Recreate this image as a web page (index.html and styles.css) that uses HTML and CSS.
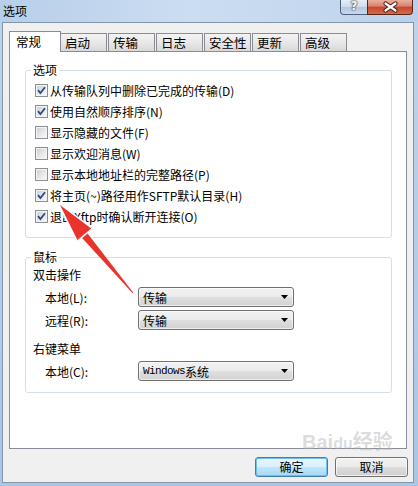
FILE: index.html
```html
<!DOCTYPE html>
<html lang="zh-CN">
<head>
    <meta charset="UTF-8">
    <title>选项</title>
    <link rel="stylesheet" href="styles.css">
</head>
<body>
    <div class="window">
        <div class="titlebar">
            <span class="title">选项</span>
            <div class="caption">
                <span class="cap-btn cap-help">?</span>
                <span class="cap-btn cap-close">
                    <svg width="45" height="14" viewBox="0 0 45 14">
                        <path d="M17.5 3.5 L27.5 10.5 M27.5 3.5 L17.5 10.5" stroke="#4a1c12" stroke-width="4.2" stroke-linecap="round"/>
                        <path d="M17.5 3.5 L27.5 10.5 M27.5 3.5 L17.5 10.5" stroke="#fff" stroke-width="2.2" stroke-linecap="round"/>
                    </svg>
                </span>
            </div>
        </div>

        <div class="client">
            <div class="tabs">
                <span class="tab active">常规</span>
                <span class="tab">启动</span>
                <span class="tab">传输</span>
                <span class="tab">日志</span>
                <span class="tab">安全性</span>
                <span class="tab">更新</span>
                <span class="tab">高级</span>
            </div>

            <div class="panel">
                <fieldset class="group opts">
                    <legend>选项</legend>
                    <label class="check"><span class="cb"><svg width="11" height="11" viewBox="0 0 11 11"><path d="M2 5.2 L4.4 8 L9 2.2" fill="none" stroke="#2c4a86" stroke-width="1.8"/></svg></span>从传输队列中删除已完成的传输(D)</label>
                    <label class="check"><span class="cb"><svg width="11" height="11" viewBox="0 0 11 11"><path d="M2 5.2 L4.4 8 L9 2.2" fill="none" stroke="#2c4a86" stroke-width="1.8"/></svg></span>使用自然顺序排序(N)</label>
                    <label class="check"><span class="cb"></span>显示隐藏的文件(F)</label>
                    <label class="check"><span class="cb"></span>显示欢迎消息(W)</label>
                    <label class="check"><span class="cb"></span>显示本地地址栏的完整路径(P)</label>
                    <label class="check"><span class="cb"><svg width="11" height="11" viewBox="0 0 11 11"><path d="M2 5.2 L4.4 8 L9 2.2" fill="none" stroke="#2c4a86" stroke-width="1.8"/></svg></span>将主页(~)路径用作SFTP默认目录(H)</label>
                    <label class="check"><span class="cb"><svg width="11" height="11" viewBox="0 0 11 11"><path d="M2 5.2 L4.4 8 L9 2.2" fill="none" stroke="#2c4a86" stroke-width="1.8"/></svg></span>退出Xftp时确认断开连接(O)</label>
                </fieldset>

                <fieldset class="group mouse">
                    <legend>鼠标</legend>
                    <div class="subhead">双击操作</div>
                    <div class="combo-row first">
                        <span class="lbl">本地(L):</span>
                        <div class="combo">传输<svg width="7" height="4" viewBox="0 0 7 4"><path d="M0 0 H7 L3.5 4 Z" fill="#000"/></svg></div>
                    </div>
                    <div class="combo-row">
                        <span class="lbl">远程(R):</span>
                        <div class="combo">传输<svg width="7" height="4" viewBox="0 0 7 4"><path d="M0 0 H7 L3.5 4 Z" fill="#000"/></svg></div>
                    </div>
                    <div class="subhead second">右键菜单</div>
                    <div class="combo-row first">
                        <span class="lbl">本地(C):</span>
                        <div class="combo"><span class="mono">Windows</span>系统<svg width="7" height="4" viewBox="0 0 7 4"><path d="M0 0 H7 L3.5 4 Z" fill="#000"/></svg></div>
                    </div>
                </fieldset>
            </div>

            <div class="actions">
                <button class="btn default">确定</button>
                <button class="btn">取消</button>
            </div>
        </div>

        <!-- annotation arrow drawn over the dialog -->
        <svg class="arrow" width="418" height="486" viewBox="0 0 418 486">
            <polygon points="133.4,292.7 86.8,232.4 81.2,237.0 132.6,293.3" fill="#e8342a"/>
            <polygon points="60,205 91.2,228.5 77.4,240" fill="#e8342a" stroke="#fff" stroke-width="3" stroke-linejoin="round" paint-order="stroke"/>
        </svg>

        <div class="watermark">Bai<span class="wm-du">du</span>经验</div>
    </div>
</body>
</html>
```

FILE: styles.css
```css
/* Page */
body {
    margin: 0;
    background: #fff;
    font-family: "Noto Sans CJK SC", sans-serif;
    font-size: 12px;
    color: #000;
}

/* Window frame */
.window {
    position: relative;
    width: 418px;
    height: 486px;
    overflow: hidden;
    background: linear-gradient(to bottom, #bcd3ec 0, #cadcf1 12px, #bdd3eb 22px, #aac6e6 100%);
}

.titlebar {
    display: flex;
    justify-content: space-between;
    height: 22px;
    background: linear-gradient(to right, #b7cfea, #cbddf1 45%, #c3d7ee 80%, #b9d0ea);
}

.title {
    padding: 4px 0 0 3px;
    line-height: 14px;
    font-size: 12px;
}

.caption {
    display: flex;
    height: 15px;
    margin-right: 5px;
}

.cap-btn {
    box-sizing: border-box;
    height: 15px;
    border: 1px solid #4d617c;
    border-top: none;
}

.cap-help {
    width: 27px;
    border-right: none;
    border-radius: 0 0 0 4px;
    background: linear-gradient(#e4ecf6, #cfdcec 50%, #b4c6de 51%, #c9d9ec);
    color: #fff;
    font-family: "DejaVu Sans", sans-serif;
    font-weight: bold;
    font-size: 12px;
    line-height: 13px;
    text-align: center;
    text-shadow: 0 0 1px #2c3b52, 0 0 1px #2c3b52, 0 0 2px #2c3b52;
}

.cap-close {
    width: 46px;
    border-color: #5a2418;
    border-radius: 0 0 4px 0;
    background: linear-gradient(#eab0a2, #d9806b 45%, #c4472c 50%, #d46a4f);
}

.cap-close svg {
    display: block;
}

/* Client area */
.client {
    box-sizing: border-box;
    width: 412px;
    height: 461px;
    margin-left: 2px;
    border: 1px solid #8495aa;
    background: #f0f0f0;
}

/* Tab strip */
.tabs {
    display: flex;
    align-items: flex-end;
    height: 20px;
    margin: 8px 0 0 6px;
}

.tab {
    box-sizing: border-box;
    width: 47px;
    height: 18px;
    margin-left: 1px;
    padding-left: 4px;
    border: 1px solid #898c95;
    border-bottom: none;
    background: linear-gradient(#f3f3f3, #e8e8e8 50%, #d8d8d8);
    font-size: 12.5px;
    line-height: 17px;
}

.tab.active {
    position: relative;
    z-index: 1;
    width: 52px;
    height: 21px;
    margin: 0 0 -1px 0;
    padding-left: 6px;
    background: #fff;
    line-height: 19px;
}

.tab.active + .tab {
    margin-left: -1px;
}

.panel {
    box-sizing: border-box;
    width: 398px;
    height: 398px;
    margin-left: 6px;
    padding: 11px 14px 0 15px;
    border: 1px solid #898c95;
    background: #fff;
}

/* Group boxes */
.group {
    min-width: 0;
    margin: 0;
    border: 1px solid #d5dfe5;
    border-radius: 3px;
}

.group legend {
    margin-left: 5px;
    padding: 0 2px;
    line-height: 14px;
}

.opts {
    padding: 3px 0 10px 0;
}

.mouse {
    margin-top: 12px;
    padding: 4px 0 11px 0;
}

.check {
    display: flex;
    align-items: center;
    height: 21px;
    margin-left: 9px;
    white-space: nowrap;
}

.cb {
    box-sizing: border-box;
    width: 13px;
    height: 13px;
    margin-right: 2px;
    border: 1px solid #8e8f8f;
    background: linear-gradient(135deg, #c8ccd2 0%, #e6e8eb 55%, #fafafa 100%);
    box-shadow: inset 0 0 0 1px #f4f4f4;
}

.cb svg {
    display: block;
}

.subhead {
    margin-left: 7px;
    line-height: 14px;
}

.subhead.second {
    margin-top: 12px;
}

.combo-row {
    display: flex;
    align-items: center;
    height: 20px;
    margin-top: 3px;
    padding-left: 19px;
}

.combo-row.first {
    margin-top: 5px;
}

.lbl {
    width: 93px;
}

.combo {
    display: flex;
    align-items: center;
    box-sizing: border-box;
    width: 156px;
    height: 20px;
    padding: 0 5px 0 4px;
    border: 1px solid #707070;
    border-radius: 3px;
    background: linear-gradient(#f2f2f2, #ebebeb 50%, #dfdfdf 51%, #d2d2d2);
    box-shadow: inset 0 0 0 1px rgba(255, 255, 255, 0.6);
}

.combo .mono {
    font-family: "Liberation Mono", monospace;
    font-size: 11px;
    letter-spacing: -0.6px;
}

.combo svg {
    margin-left: auto;
}

/* Dialog buttons */
.actions {
    display: flex;
    justify-content: flex-end;
    gap: 7px;
    padding: 8px 5px 0 0;
}

.btn {
    box-sizing: border-box;
    width: 73px;
    height: 20px;
    padding: 0;
    border: 1px solid #707070;
    border-radius: 3px;
    background: linear-gradient(#f2f2f2, #ebebeb 50%, #dddddd 51%, #cfcfcf);
    box-shadow: inset 0 0 0 1px rgba(255, 255, 255, 0.7);
    font-family: "Noto Sans CJK SC", sans-serif;
    font-size: 12px;
    line-height: 18px;
    color: #000;
}

.btn.default {
    border-color: #3c7fb1;
    background: linear-gradient(#eaf6fd, #d9f0fc 50%, #bee6fd 51%, #a7d9f5);
    box-shadow: inset 0 0 0 1px #6fc0ea;
}

/* Overlays */
.arrow {
    position: absolute;
    left: 0;
    top: 0;
    pointer-events: none;
}

.watermark {
    position: absolute;
    left: 302px;
    top: 430px;
    color: rgba(175, 175, 175, 0.45);
    font-family: "Liberation Sans", "Noto Sans CJK SC", sans-serif;
    font-weight: bold;
    font-size: 20px;
    line-height: 24px;
    pointer-events: none;
}

.wm-du {
    font-size: 16px;
}
```
